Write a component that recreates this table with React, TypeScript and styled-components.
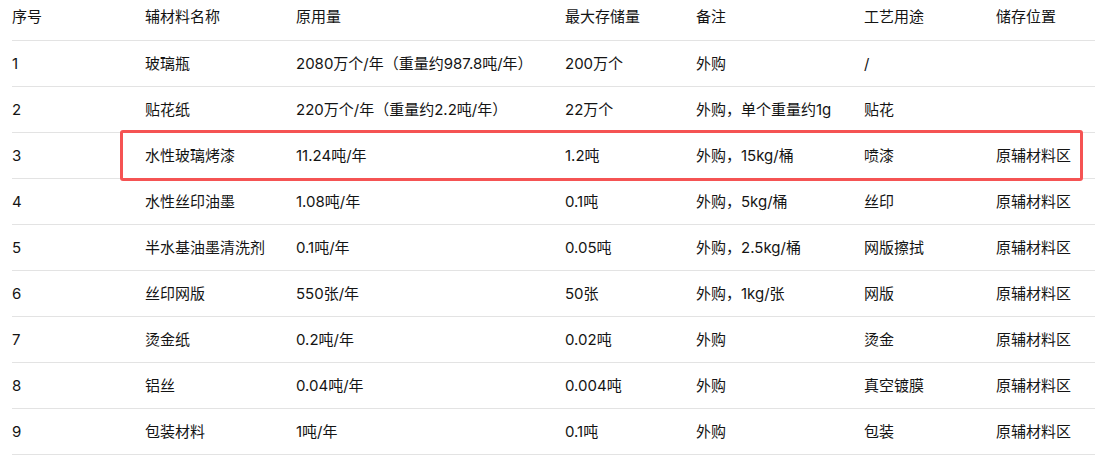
import styled, { createGlobalStyle } from 'styled-components';

const GlobalStyle = createGlobalStyle`
  html, body {
    margin: 0;
    padding: 0;
    background: #ffffff;
  }
  body {
    font-family: Inter, 'Noto Sans CJK SC', sans-serif;
    color: #141414;
    font-size: 15px;
  }
`;

const COLUMNS = '133px 151px 269px 131px 168px 132px 1fr';

const HEADERS = ['序号', '辅材料名称', '原用量', '最大存储量', '备注', '工艺用途', '储存位置'];

const ROWS: string[][] = [
  ['1', '玻璃瓶', '2080万个/年（重量约987.8吨/年）', '200万个', '外购', '/', ''],
  ['2', '贴花纸', '220万个/年（重量约2.2吨/年）', '22万个', '外购，单个重量约1g', '贴花', ''],
  ['3', '水性玻璃烤漆', '11.24吨/年', '1.2吨', '外购，15kg/桶', '喷漆', '原辅材料区'],
  ['4', '水性丝印油墨', '1.08吨/年', '0.1吨', '外购，5kg/桶', '丝印', '原辅材料区'],
  ['5', '半水基油墨清洗剂', '0.1吨/年', '0.05吨', '外购，2.5kg/桶', '网版擦拭', '原辅材料区'],
  ['6', '丝印网版', '550张/年', '50张', '外购，1kg/张', '网版', '原辅材料区'],
  ['7', '烫金纸', '0.2吨/年', '0.02吨', '外购', '烫金', '原辅材料区'],
  ['8', '铝丝', '0.04吨/年', '0.004吨', '外购', '真空镀膜', '原辅材料区'],
  ['9', '包装材料', '1吨/年', '0.1吨', '外购', '包装', '原辅材料区'],
];

const HIGHLIGHT_ROW = 2;

const Table = styled.div`
  margin: 0 4px 0 12px;
  display: flex;
  flex-direction: column;
`;

const Row = styled.div<{ $header?: boolean }>`
  position: relative;
  display: grid;
  grid-template-columns: ${COLUMNS};
  height: ${({ $header }) => ($header ? '41px' : '46px')};
  align-items: ${({ $header }) => ($header ? 'start' : 'center')};
  padding-top: ${({ $header }) => ($header ? '7px' : '0')};
  box-sizing: border-box;
  border-bottom: 1px solid #e3e3e3;
`;

const Cell = styled.div`
  line-height: 20px;
  white-space: nowrap;
`;

const Highlight = styled.div`
  position: absolute;
  left: 108px;
  right: 12px;
  top: -3px;
  bottom: -3px;
  border: 3px solid #f55353;
  border-radius: 3px;
  pointer-events: none;
`;

const App = () => (
  <>
    <GlobalStyle />
    <Table>
      <Row $header>
        {HEADERS.map((h) => (
          <Cell key={h}>{h}</Cell>
        ))}
      </Row>
      {ROWS.map((row, i) => (
        <Row key={row[0]}>
          {row.map((c, j) => (
            <Cell key={j}>{c}</Cell>
          ))}
          {i === HIGHLIGHT_ROW && <Highlight />}
        </Row>
      ))}
    </Table>
  </>
);

export default App;
